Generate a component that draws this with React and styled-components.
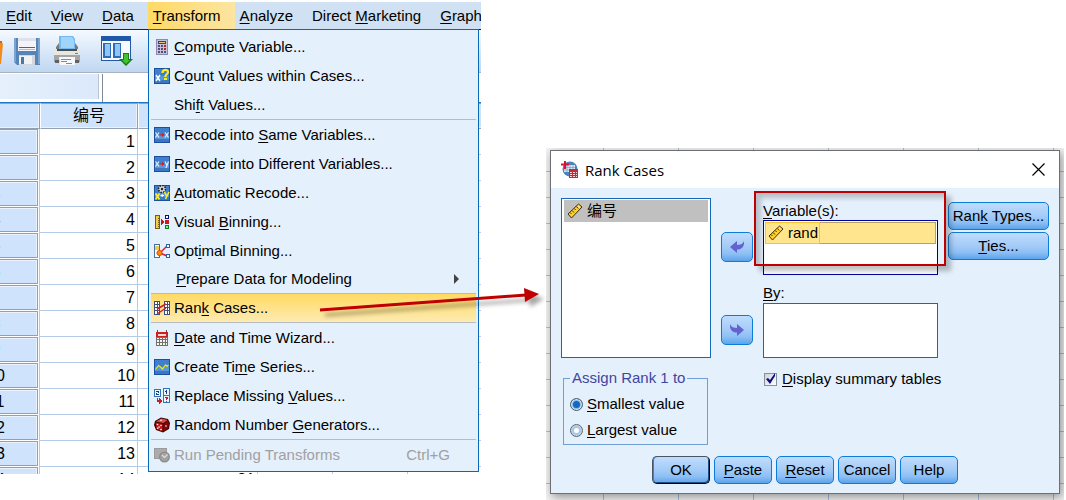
import React from 'react';
import styled, { createGlobalStyle, css } from 'styled-components';

const GlobalStyle = createGlobalStyle`
  * {
    box-sizing: border-box;
  }

  body {
    margin: 0;
    background: #fff;
    color: #000;
    font-family: "Liberation Sans", "Noto Sans CJK SC", sans-serif;
    font-size: 15px;
    line-height: 18px;
  }

  button, input {
    font: inherit;
    color: inherit;
  }
`;

const Page = styled.main`
  position: relative;
  display: grid;
  grid-template-columns: 481fr 518fr;
  column-gap: 65px;
  height: 100vh;
  padding-right: 2px;
  overflow: hidden;
`;

/* ---------- data editor ---------- */

const EditorWindow = styled.section`
  position: relative;
  margin: 2px 0 26px;
  overflow: hidden;
  background: #fff;
`;

const MenuBar = styled.nav`
  display: flex;
  height: 28px;
  padding-left: 1px;
  background: #cfe1f2;
  border-bottom: 1px solid #10243c;
`;

const MenuBarItem = styled.button`
  flex: none;
  padding: 0 14px 0 5px;
  border: 0;
  background: ${props => (props.$open ? 'linear-gradient(to right, #ffd965, #fce5a2)' : 'none')};
`;

const ToolBar = styled.div`
  display: flex;
  align-items: center;
  gap: 10px;
  height: 42px;
  background: linear-gradient(#f6faff, #dceafa 45%, #bfd7f1);
`;

const ToolButton = styled.button`
  display: flex;
  margin-left: ${props => (props.$group ? 10 : 0)}px;
  padding: 0;
  border: 0;
  background: none;
`;

const CellBar = styled.div`
  display: flex;
  gap: 3px;
  height: 31px;
  padding-top: 1px;
  border-top: 1px solid #a9b3bf;
  border-bottom: 1px solid #2277c4;
  background: #fff;
`;

const CellName = styled.output`
  width: 99px;
  margin-bottom: 3px;
  background: linear-gradient(to right, #e6f0fb, #dbe9fb);
  border-right: 1px solid #b9c4d0;
`;

const CellInput = styled.input`
  flex: 1;
  border: 0;
  border-left: 1px solid #7f8b99;
  padding: 0;
`;

/* the row headers start left of the visible part */
const Sheet = styled.table`
  table-layout: fixed;
  width: 604px;
  margin-left: -46px;
  border-spacing: 0;
  font-size: 16px;

  tr {
    height: 26px;
  }

  th, td {
    padding: 0;
    font-weight: 400;
  }

  td {
    padding-right: 2px;
    text-align: right;
    border-right: 1px solid #b3cbe6;
    border-bottom: 1px solid #b3cbe6;
  }

  tbody th {
    padding: 0 1px 1px 0;
    border-right: 1px solid #b3cbe6;
  }
`;

const HeadCell = styled.th`
  background: #cfe3fc;
  border: 1px solid #93a1b3;
  border-left-color: ${props => (props.$corner ? '#93a1b3' : '#fff')};
  box-shadow: inset -1px -1px #e9f2fd;
`;

const RowHead = styled.span`
  display: block;
  height: 25px;
  line-height: 23px;
  background: #cfe3fc;
  border: 1px solid #8f9fb5;
  box-shadow: inset -1px 1px #e9f2fd;
`;

const Menu = styled.ul`
  position: absolute;
  top: 27px;
  left: 148px;
  right: 2px;
  margin: 0;
  padding: 2px;
  list-style: none;
  background: #e4f0fc;
  border: 1px solid #0a68b8;
`;

const MenuItem = styled.button`
  display: flex;
  align-items: center;
  gap: 4px;
  width: 100%;
  height: 29px;
  padding: 0 26px 0 3px;
  border: 0;
  background: none;
  text-align: left;

  ${props => props.$submenu && css`
    height: 28px;
    padding: 0 17px 0 5px;
  `}

  ${props => props.$selected && css`
    height: 30px;
    background: linear-gradient(#ffda62, #fdebb2);
    border: 1px solid #b8bcc2;
    border-width: 1px 0;
  `}

  &:disabled {
    color: #a0a0a0;
  }
`;

const MenuIcon = styled.span`
  display: flex;
  flex: none;
  width: 16px;
  height: 16px;
`;

const MenuText = styled.span`
  flex: 1;
`;

const Separator = styled.li`
  height: 1px;
  background: #b8bcc2;
`;

const Key = styled.u`
  text-decoration-thickness: 1px;
  text-underline-offset: 2px;
`;

/* ---------- dialog ---------- */

const Backdrop = styled.div`
  margin-top: 148px;
  padding: 2px 4px 6px;
  overflow: hidden;
  background:
    repeating-linear-gradient(to right, transparent 0 57px, #a9bfd6 57px 58px, transparent 58px 75px),
    repeating-linear-gradient(transparent 0 23px, #a9bfd6 23px 24px, transparent 24px 26px),
    #f2f2f2;
`;

const Dialog = styled.section`
  position: relative;
  background: #e4f0fc;
  border: 1px solid #6c6f74;
  box-shadow: 2px 3px 9px rgba(0, 0, 0, 0.4);
`;

const TitleBar = styled.header`
  display: flex;
  align-items: center;
  gap: 7px;
  height: 37px;
  padding: 0 14px 0 10px;
  background: #fff;
`;

const Title = styled.h1`
  flex: 1;
  margin: 0;
  font: 400 15px/20px "Open Sans", sans-serif;
`;

const CloseButton = styled.button`
  display: flex;
  padding: 0;
  border: 0;
  background: none;
`;

const DialogBody = styled.form`
  display: grid;
  grid-template-columns: 150fr 32px 175fr 101px;
  column-gap: 10px;
  row-gap: 11px;
  padding: 10px 10px 9px;
`;

const ListBox = styled.ul`
  margin: 0;
  padding: 1px ${props => (props.$focused ? 1 : 2)}px;
  min-height: 55px;
  list-style: none;
  background: #fff;
  border: 1px solid ${props => (props.$focused ? '#0000a0' : '#1569b8')};
`;

const ListItem = styled.li`
  display: flex;
  align-items: center;
  gap: 4px;
  height: 22px;
  padding-left: 3px;
  background: #c0c0c0;
`;

const ChosenItem = styled.li`
  height: 22px;
  background: #ffe68e;
  border: 1px solid #b5a45c;
`;

const ChosenLabel = styled.span`
  display: inline-flex;
  align-items: center;
  gap: 4px;
  height: 22px;
  margin: -1px;
  padding: 0 1px 0 2px;
  border: 1px solid #f8c42c;
`;

const MoveButtons = styled.div`
  display: flex;
  flex-direction: column;
  gap: 53px;
  padding-top: 34px;
`;

const Column = styled.div`
  display: flex;
  flex-direction: column;
  padding-top: 4px;
`;

const BoxLabel = styled.label`
  height: ${props => (props.$spaced ? 28 : 18)}px;
  padding-top: ${props => (props.$spaced ? 9 : 0)}px;
`;

const SideButtons = styled.div`
  display: flex;
  flex-direction: column;
  gap: 2px;
  padding-top: 4px;
`;

const Button = styled.button`
  display: flex;
  align-items: center;
  justify-content: center;
  height: ${props => (props.$move ? 30 : 28)}px;
  padding: 0;
  white-space: nowrap;
  background: linear-gradient(#c0dcfc, #a3cbf8 50%, #8cbff5 75%, #5ca3ea);
  border: 1px solid #0d7cd8;
  border-radius: 5px;

  ${props => props.$primary && css`
    border-color: #4a5664 #000 #000 #4a5664;
    box-shadow: inset 1px 0 #2d86d8, inset -1px -1px #1c4f86;
  `}
`;

const RankGroup = styled.fieldset`
  min-width: 0;
  margin: 0 3px 0 2px;
  padding: 4px 6px 1px;
  border: 1px solid #6f9fd4;
`;

const Legend = styled.legend`
  padding: 0 2px;
  white-space: nowrap;
  color: #3f46a0;
`;

const RadioLabel = styled.label`
  display: flex;
  align-items: center;
  gap: 4px;
  height: 26px;
`;

const Radio = styled.input`
  appearance: none;
  width: 13px;
  height: 13px;
  margin: 0;
  border: 1px solid #5c6670;
  border-radius: 50%;
  background: #fff;
  box-shadow: inset 0 0 0 1px #c9d3dc, inset 0 0 0 3px #a9c8e8;

  &:checked {
    background: #1269c4;
    box-shadow: inset 0 0 0 1px #d9e2ea, inset 0 0 0 2px #8ab8e6;
  }
`;

const CheckLabel = styled.label`
  position: relative;
  display: flex;
  grid-column: 3 / 5;
  align-items: center;
  align-self: start;
  gap: 5px;
  height: 20px;
  padding-left: 1px;
`;

const CheckBox = styled.input`
  appearance: none;
  width: 13px;
  height: 13px;
  margin: 0;
  border: 1px solid #87919b;
  background: linear-gradient(135deg, #cfd2d8, #fff);
`;

const CheckMark = styled.svg`
  position: absolute;
  left: 3px;
  top: 4px;
  pointer-events: none;
`;

const Footer = styled.footer`
  display: flex;
  grid-column: 1 / -1;
  justify-content: center;
  gap: 4px;

  button {
    width: 58px;
  }
`;

/* ---------- annotations ---------- */

const RedFrame = styled.div`
  position: absolute;
  top: 40px;
  left: 203px;
  width: 192px;
  height: 75px;
  border: 2px solid #c00000;
  box-shadow: 5px 5px 5px rgba(0, 0, 0, 0.25), inset 5px 5px 5px rgba(0, 0, 0, 0.2);
  pointer-events: none;
`;

const RedArrow = styled.svg`
  position: absolute;
  left: 316px;
  top: 280px;
  pointer-events: none;
  filter: drop-shadow(5px 5px 2px rgba(0, 0, 0, 0.35));
`;

/* ---------- icons ---------- */

const Icon = ({ children }) => (
  <svg width="16" height="16" viewBox="0 0 16 16" shapeRendering="crispEdges" aria-hidden="true">
    {children}
  </svg>
);

const BlueTile = () => (
  <>
    <rect width="16" height="16" fill="#1d4fa0" />
    <rect x="1" y="1" width="14" height="7" fill="#3f7fcc" />
    <rect x="1" y="8" width="14" height="4" fill="#5698dc" />
    <rect x="1" y="12" width="14" height="3" fill="#3b78c4" />
  </>
);

const ComputeIcon = () => (
  <Icon>
    <rect x="2" y="0" width="12" height="16" fill="#8d88b0" />
    <rect x="3" y="1" width="10" height="14" fill="#c4c1dc" />
    <rect x="4" y="2" width="8" height="3" fill="#47416f" />
    <rect x="5" y="3" width="6" height="1" fill="#e8c27c" />
    <path d="M4 6h2v2H4zM7 6h2v2H7zM4 9h2v2H4zM7 9h2v2H7zM4 12h2v2H4zM7 12h2v2H7z" fill="#544e7c" />
    <path d="M10 6h2v2h-2zM10 9h2v2h-2z" fill="#c02020" />
    <path d="M10 12h2v2h-2z" fill="#544e7c" />
  </Icon>
);

const CountIcon = () => (
  <Icon>
    <BlueTile />
    <path d="M2 7l4 6M6 7l-4 6" stroke="#fff" strokeWidth="1.4" shapeRendering="auto" />
    <path d="M8.500 5c0-4 5.500-4 5.500-1 0 2.500-2.700 2-2.700 5" fill="none" stroke="#ffef1c" strokeWidth="2.200" shapeRendering="auto" />
    <rect x="10" y="10" width="3" height="2" fill="#ffef1c" />
  </Icon>
);

const RecodeIcon = ({ different }) => (
  <Icon>
    <BlueTile />
    <g fill="none" stroke="#e4eefa" strokeWidth="1.300" shapeRendering="auto">
      <path d="M1.500 5.500l3.500 5M5 5.500l-3.500 5" />
      <path d={different ? 'M11 5.500l2 4M14.500 5.500L12 12' : 'M11 5.500l3.500 5M14.500 5.500l-3.500 5'} />
    </g>
    <path d="M5.500 7.400H8V6l2.600 2L8 10V8.600H5.500z" fill="#e01818" shapeRendering="auto" />
  </Icon>
);

const AutoRecodeIcon = () => (
  <Icon>
    <BlueTile />
    <g shapeRendering="auto">
      <circle cx="8" cy="4" r="3.500" fill="#d8d8d8" stroke="#222" strokeWidth="1.600" strokeDasharray="1.500 1.200" />
      <circle cx="8" cy="4" r="1.200" fill="#222" />
      <path d="M1.500 8.500l4 6M5.500 8.500l-4 6" stroke="#fff01e" strokeWidth="1.600" />
      <path d="M10.500 7l2 4M15 7l-3.500 7" stroke="#fff01e" strokeWidth="1.600" />
      <path d="M6.500 10.500h3.500M8.200 9v3" stroke="#fff" />
    </g>
  </Icon>
);

const VisualBinningIcon = () => (
  <Icon>
    <path d="M1 1h5v14H1z" fill="#7a5b10" />
    <path d="M2 2h3v12H2z" fill="#f2cc46" />
    <path d="M4 4h1v1H4zM4 6h1v1H4zM4 8h1v1H4zM4 10h1v1H4zM4 12h1v1H4z" fill="#7a5b10" />
    <path d="M7 5l3 3-3 3z" fill="#c01818" />
    <path d="M11 1h4v4h-4z" fill="#10107c" />
    <path d="M12 2h2v2h-2z" fill="#fff" />
    <path d="M11 6h4v4h-4z" fill="#c81c1c" />
    <path d="M11 11h4v4h-4z" fill="#107c1c" />
    <path d="M12 12h2v2h-2z" fill="#9be09b" />
  </Icon>
);

const OptimalBinningIcon = () => (
  <Icon>
    <path d="M0 1h6v14H0z" fill="#4470a4" />
    <path d="M1 2h4v12H1z" fill="#fff" />
    <path d="M1 3h4v4H1z" fill="#f2cc46" />
    <g shapeRendering="auto">
      <path d="M13 3L6 10l7 3" fill="none" stroke="#d01838" strokeWidth="1.400" />
      <circle cx="5.500" cy="10" r="2.600" fill="#ff8a00" stroke="#d64a10" />
    </g>
    <path d="M12 1h4v4h-4zM12 11h4v4h-4z" fill="#2f62a0" />
    <path d="M13 2h2v2h-2zM13 12h2v2h-2z" fill="#fff" />
  </Icon>
);

const RankIcon = () => (
  <Icon>
    <path d="M0 1h6v14H0zM10 1h6v14h-6z" fill="#3c4f7c" />
    <path d="M1 2h2v2H1zM4 2h1v2H4zM1 5h2v2H1zM4 5h1v2H4zM1 8h2v2H1zM4 8h1v2H4zM1 11h2v3H1zM4 11h1v3H4zM11 2h2v2h-2zM14 2h1v2h-1zM11 5h2v2h-2zM14 5h1v2h-1zM11 8h2v2h-2zM14 8h1v2h-1zM11 11h2v3h-2zM14 11h1v3h-1z" fill="#fff" />
    <path d="M3 9l9-5M3 14l9-6" stroke="#d01c24" strokeWidth="1.500" shapeRendering="auto" />
  </Icon>
);

const DateIcon = () => (
  <Icon>
    <path d="M3 0h1v3H3zM12 0h1v3h-1z" fill="#555" />
    <path d="M2 2h12v5H2z" fill="#cc1f1f" />
    <path d="M4 4h8v2H4z" fill="#fbd9d9" />
    <path d="M2 7h12v9H2z" fill="#70706c" />
    <path d="M3 8h2v1H3zM6 8h2v1H6zM9 8h2v1H9zM12 8h1v1h-1zM3 10h2v2H3zM6 10h2v2H6zM9 10h2v2H9zM12 10h1v2h-1zM3 13h2v2H3zM6 13h2v2H6zM9 13h2v2H9zM12 13h1v2h-1z" fill="#f4f4f0" />
  </Icon>
);

const SeriesIcon = () => (
  <Icon>
    <BlueTile />
    <path d="M1.500 10.500l3-4 2 1.500 2 2 3-4 1.500 1.500 1.500-1.500" fill="none" stroke="#f4ea18" strokeWidth="1.200" shapeRendering="auto" />
  </Icon>
);

const ReplaceIcon = () => (
  <Icon>
    <path d="M0 1h7v8H0zM9 0h7v15H9z" fill="#3473b4" />
    <path d="M1 2h5v6H1zM10 1h5v6h-5zM10 8h5v6h-5z" fill="#eaf4ff" />
    <path d="M2 3h3v2H3v1h2v1H2V5h2V4H2zM12 2h1v4h-1zM11 3h1v1h-1z" fill="#14407c" />
    <path d="M11 9h3v2h-1v1h-1v-2h1v0h-2zM12 13h1v1h-1z" fill="#d01828" />
    <path d="M3 10h1v2h1v-2l3 3-3 3v-2H3z" fill="#cc1828" />
  </Icon>
);

const DiceIcon = () => (
  <svg width="16" height="16" viewBox="0 0 16 16" aria-hidden="true">
    <path d="M1 4l6-3.500 7 1.500 2 4-1 6-6 3.500-7-2.500L0 8z" fill="#3a0505" />
    <path d="M2 4.500L7.500 1.500l6 1.500-4 3z" fill="#e84848" />
    <path d="M1.500 5.500l7 1.500v7.500l-6-2.500z" fill="#c41616" />
    <path d="M9.500 7l4.500-3.500 1 3-1 5-4.500 3z" fill="#7c0808" />
    <g fill="#fff">
      <circle cx="7" cy="3.200" r=".8" />
      <circle cx="3.500" cy="7.500" r=".8" />
      <circle cx="7" cy="8.500" r=".8" />
      <circle cx="5" cy="10" r=".8" />
      <circle cx="3.700" cy="11.300" r=".8" />
      <circle cx="7" cy="12.500" r=".8" />
      <circle cx="12" cy="9" r=".8" />
    </g>
  </svg>
);

const PendingIcon = () => (
  <svg width="16" height="16" viewBox="0 0 16 16" aria-hidden="true">
    <path d="M0 1h13v11H0z" fill="#9b9b9b" />
    <path d="M1 2h11v9H1z" fill="#ababab" />
    <circle cx="10.500" cy="10" r="5.500" fill="#8c8c8c" />
    <circle cx="10.500" cy="10" r="4.200" fill="#a2a2a2" />
    <path d="M8 8l2.500 2.500 3-3" fill="none" stroke="#dedede" strokeWidth="1.200" />
  </svg>
);

const FolderIcon = () => (
  <svg width="3" height="30" viewBox="0 0 3 30" aria-hidden="true">
    <path d="M0 5h1l2 3-2 20H0z" fill="#f08a1c" />
    <path d="M0 5h2v2H0z" fill="#c8641c" />
  </svg>
);

const SaveIcon = () => (
  <svg width="30" height="28" viewBox="0 0 30 28" aria-hidden="true">
    <path d="M1 1h26v27H4l-3-3z" fill="#5484b8" />
    <path d="M1 1h2v24H1zM25 1h2v26h-2z" fill="#7ba4cf" />
    <path d="M5 0h18v14H5z" fill="#f4f4f8" />
    <path d="M5 1h18v3H5z" fill="#dfe1ea" />
    <path d="M6 10h16v1H6z" fill="#e02838" />
    <path d="M6 12h16v1H6z" fill="#b9bdc9" />
    <path d="M6 18h16v10H6z" fill="#d3d6da" />
    <path d="M6 19h13v8H6z" fill="#f2f2f2" />
    <path d="M8 20h3v7H8z" fill="#4a76a8" />
  </svg>
);

const PrintIcon = () => (
  <svg width="28" height="30" viewBox="0 0 28 30" aria-hidden="true">
    <path d="M3 11l3-4h16l3 4v5H3z" fill="#77797c" />
    <path d="M6 0h14l2 3v10H6z" fill="#74b9f0" />
    <path d="M8 1h11l2 3v8H8z" fill="#9fd4fb" />
    <path d="M1 13h26v7H1z" fill="#e6e6e3" />
    <path d="M4 13h20v2H4z" fill="#4c4e50" />
    <path d="M1 19h26v7H1z" fill="#a4a5a6" />
    <path d="M2 24h4v3H2zM22 24h4v3h-4z" fill="#606264" />
    <path d="M6 21h16v8H7z" fill="#f8f8fa" />
    <path d="M8 23h10v1H8zM8 25h6v1H8zM13 27h6v1h-6z" fill="#7d8d9c" />
    <path d="M22 17h3v1h-3z" fill="#4fa04f" />
  </svg>
);

const VariablesIcon = () => (
  <svg width="32" height="30" viewBox="0 0 32 30" aria-hidden="true">
    <path d="M0 0h30v25H0z" fill="#2258a8" />
    <path d="M1 5h28v19H1z" fill="#f7fbff" />
    <path d="M2 7h8v15H2zM12 7h8v15h-8z" fill="#2b6db8" />
    <path d="M4 8h5v12H4zM14 8h5v12h-5z" fill="#8ec6f6" />
    <path d="M22 17h6v6h4l-7 7-7-7h4z" fill="#1b7c16" />
    <path d="M23 18h4v6h2l-4 4-4-4h2z" fill="#3fc42e" />
  </svg>
);

const AppIcon = () => (
  <svg width="17" height="17" viewBox="0 0 17 17" aria-hidden="true">
    <circle cx="9" cy="8" r="7.500" fill="#4a86bd" />
    <path d="M3 4h11v7H3z" fill="#dbe8f3" />
    <path d="M3 6.500h11M3 9h11M6 4v7M9 4v7M12 4v7" stroke="#6b94b8" strokeWidth=".6" />
    <path d="M4 0v8M0 3.500h8" stroke="#d8103c" strokeWidth="2" />
    <path d="M8 8h9v9H8z" fill="#c22a3c" />
    <path d="M9 11h2v1H9zM12 11h2v1h-2zM15 11h1v1h-1zM9 13h2v1H9zM12 13h2v1h-2zM15 13h1v1h-1zM9 15h2v1H9zM12 15h2v1h-2zM15 15h1v1h-1z" fill="#f8d4d8" />
  </svg>
);

const RulerIcon = () => (
  <svg width="16" height="16" viewBox="0 0 16 16" aria-hidden="true">
    <path d="M1 11L11.500 1l3.500 3L4.500 15z" fill="#ffd02c" stroke="#3a3014" />
    <path d="M3 9.500l1.500 1.500M5 7.500l2 2M7.200 5.500l1.500 1.500M9.300 3.500l2 2" stroke="#3a3014" />
    <circle cx="12" cy="3.800" r=".7" fill="#fff" />
  </svg>
);

const MoveArrow = ({ left }) => (
  <svg width="14" height="14" viewBox="0 0 14 14" aria-hidden="true">
    <path
      d={left
        ? 'M0 7l7-6v4c3 0 6-1 7-4 .6 5-2 8.500-7 8.500V13z'
        : 'M14 7L7 1v4C4 5 1 4 0 1c-.6 5 2 8.500 7 8.500V13z'}
      fill="#6462cf"
    />
  </svg>
);

/* ---------- content ---------- */

// The letter after "&" is the underlined access key
const Label = ({ text }) => {
  const at = text.indexOf('&');
  if (at < 0) return text;
  return (
    <>
      {text.slice(0, at)}<Key>{text[at + 1]}</Key>{text.slice(at + 2)}
    </>
  );
};

const menuBar = ['&Edit', '&View', '&Data', '&Transform', '&Analyze', 'Direct &Marketing', '&Graphs'];

const menuItems = [
  { text: '&Compute Variable...', icon: <ComputeIcon /> },
  { text: 'C&ount Values within Cases...', icon: <CountIcon /> },
  { text: 'Shi&ft Values...' },
  { separator: true },
  { text: 'Recode into &Same Variables...', icon: <RecodeIcon /> },
  { text: '&Recode into Different Variables...', icon: <RecodeIcon different /> },
  { text: '&Automatic Recode...', icon: <AutoRecodeIcon /> },
  { text: 'Visual &Binning...', icon: <VisualBinningIcon /> },
  { text: 'Opt&imal Binning...', icon: <OptimalBinningIcon /> },
  { text: '&Prepare Data for Modeling', submenu: true },
  { text: 'Ran&k Cases...', icon: <RankIcon />, selected: true },
  { text: '&Date and Time Wizard...', icon: <DateIcon /> },
  { text: 'Create Ti&me Series...', icon: <SeriesIcon /> },
  { text: 'Replace Missing &Values...', icon: <ReplaceIcon /> },
  { text: 'Random Number &Generators...', icon: <DiceIcon /> },
  { separator: true },
  { text: 'Run Pending Transforms', icon: <PendingIcon />, shortcut: 'Ctrl+G', disabled: true }
];

const rows = Array.from({ length: 14 }, (_, i) => i + 1);

const DataEditor = () => (
  <EditorWindow>
    <MenuBar>
      {menuBar.map(text => (
        <MenuBarItem key={text} type="button" $open={text === '&Transform'}>
          <Label text={text} />
        </MenuBarItem>
      ))}
    </MenuBar>
    <ToolBar>
      <ToolButton type="button" aria-label="Open"><FolderIcon /></ToolButton>
      <ToolButton type="button" aria-label="Save"><SaveIcon /></ToolButton>
      <ToolButton type="button" aria-label="Print"><PrintIcon /></ToolButton>
      <ToolButton type="button" aria-label="Variables" $group><VariablesIcon /></ToolButton>
    </ToolBar>
    <CellBar>
      <CellName />
      <CellInput aria-label="Cell value" />
    </CellBar>
    <Sheet>
      <colgroup>
        <col width="86" />
        <col width="98" />
        <col width="120" />
        <col width="75" />
        <col width="75" />
        <col width="75" />
        <col width="75" />
      </colgroup>
      <thead>
        <tr>
          <HeadCell $corner />
          <HeadCell>编号</HeadCell>
          <HeadCell />
          <HeadCell />
          <HeadCell />
          <HeadCell />
          <HeadCell />
        </tr>
      </thead>
      <tbody>
        {rows.map(row => (
          <tr key={row}>
            <th scope="row"><RowHead>{row}</RowHead></th>
            <td>{row}</td>
            <td>{row === 14 ? '81' : ''}</td>
            <td />
            <td />
            <td />
            <td />
          </tr>
        ))}
      </tbody>
    </Sheet>
    <Menu>
      {menuItems.map((item, index) => (
        item.separator ? <Separator key={index} /> : (
          <li key={index}>
            <MenuItem
              type="button"
              disabled={item.disabled}
              $selected={item.selected}
              $submenu={item.submenu}
            >
              <MenuIcon>{item.icon}</MenuIcon>
              <MenuText><Label text={item.text} /></MenuText>
              {item.shortcut && <span>{item.shortcut}</span>}
              {item.submenu && (
                <svg width="5" height="10" viewBox="0 0 5 10" aria-hidden="true">
                  <path d="M0 0l5 5-5 5z" fill="#444" />
                </svg>
              )}
            </MenuItem>
          </li>
        )
      ))}
    </Menu>
  </EditorWindow>
);

const RankCasesDialog = () => (
  <Dialog>
    <TitleBar>
      <AppIcon />
      <Title>Rank Cases</Title>
      <CloseButton type="button" aria-label="Close">
        <svg width="13" height="13" viewBox="0 0 13 13" aria-hidden="true">
          <path d="M.5.5l12 12M12.500.5l-12 12" stroke="#000" strokeWidth="1.200" />
        </svg>
      </CloseButton>
    </TitleBar>
    <DialogBody onSubmit={e => e.preventDefault()}>
      <ListBox aria-label="Source variables">
        <ListItem><RulerIcon />编号</ListItem>
      </ListBox>
      <MoveButtons>
        <Button type="button" $move aria-label="Remove variable"><MoveArrow left /></Button>
        <Button type="button" $move aria-label="Add to By"><MoveArrow /></Button>
      </MoveButtons>
      <Column>
        <BoxLabel id="variables-label"><Label text="&Variable(s):" /></BoxLabel>
        <ListBox aria-labelledby="variables-label" $focused>
          <ChosenItem>
            <ChosenLabel><RulerIcon />rand</ChosenLabel>
          </ChosenItem>
        </ListBox>
        <BoxLabel id="by-label" $spaced><Label text="&By:" /></BoxLabel>
        <ListBox aria-labelledby="by-label" />
      </Column>
      <SideButtons>
        <Button type="button"><span><Label text="Ran&k Types..." /></span></Button>
        <Button type="button"><span><Label text="&Ties..." /></span></Button>
      </SideButtons>
      <RankGroup>
        <Legend>Assign Rank 1 to</Legend>
        <RadioLabel>
          <Radio type="radio" name="rank" defaultChecked />
          <span><Label text="&Smallest value" /></span>
        </RadioLabel>
        <RadioLabel>
          <Radio type="radio" name="rank" />
          <span><Label text="&Largest value" /></span>
        </RadioLabel>
      </RankGroup>
      <CheckLabel>
        <CheckBox type="checkbox" defaultChecked />
        <CheckMark width="10" height="12" viewBox="0 0 10 12" aria-hidden="true">
          <path d="M0 6l2-1 2 2 5-7v3L4 11z" fill="#10107c" />
        </CheckMark>
        <span><Label text="&Display summary tables" /></span>
      </CheckLabel>
      <Footer>
        <Button type="submit" $primary>OK</Button>
        <Button type="button"><span><Label text="&Paste" /></span></Button>
        <Button type="button"><span><Label text="&Reset" /></span></Button>
        <Button type="button">Cancel</Button>
        <Button type="button">Help</Button>
      </Footer>
    </DialogBody>
    <RedFrame />
  </Dialog>
);

const App = () => (
  <>
    <GlobalStyle />
    <Page>
      <DataEditor />
      <Backdrop>
        <RankCasesDialog />
      </Backdrop>
      <RedArrow width="236" height="44" viewBox="0 0 236 44" aria-hidden="true">
        <path d="M4 30L210 15" stroke="#c00000" strokeWidth="3" />
        <path d="M208 8l15 6-14 8z" fill="#c00000" />
      </RedArrow>
    </Page>
  </>
);

export default App;
